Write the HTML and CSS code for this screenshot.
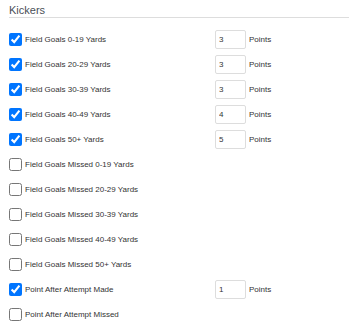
FILE: index.html
```html
<!DOCTYPE html>
<html lang="en">
<head>
    <meta charset="UTF-8">
    <meta name="viewport" content="width=device-width, initial-scale=1.0">
    <title>Kickers</title>
    <link rel="stylesheet" href="styles.css">
</head>
<body>
    <div class="section">
        <h3 class="section-title">Kickers</h3>
        <div class="rules">
            <div class="rule">
                <label class="rule-label"><input type="checkbox" checked> Field Goals 0-19 Yards</label>
                <input class="points" type="text" value="3"><span class="unit">Points</span>
            </div>
            <div class="rule">
                <label class="rule-label"><input type="checkbox" checked> Field Goals 20-29 Yards</label>
                <input class="points" type="text" value="3"><span class="unit">Points</span>
            </div>
            <div class="rule">
                <label class="rule-label"><input type="checkbox" checked> Field Goals 30-39 Yards</label>
                <input class="points" type="text" value="3"><span class="unit">Points</span>
            </div>
            <div class="rule">
                <label class="rule-label"><input type="checkbox" checked> Field Goals 40-49 Yards</label>
                <input class="points" type="text" value="4"><span class="unit">Points</span>
            </div>
            <div class="rule">
                <label class="rule-label"><input type="checkbox" checked> Field Goals 50+ Yards</label>
                <input class="points" type="text" value="5"><span class="unit">Points</span>
            </div>
            <div class="rule">
                <label class="rule-label"><input type="checkbox"> Field Goals Missed 0-19 Yards</label>
            </div>
            <div class="rule">
                <label class="rule-label"><input type="checkbox"> Field Goals Missed 20-29 Yards</label>
            </div>
            <div class="rule">
                <label class="rule-label"><input type="checkbox"> Field Goals Missed 30-39 Yards</label>
            </div>
            <div class="rule">
                <label class="rule-label"><input type="checkbox"> Field Goals Missed 40-49 Yards</label>
            </div>
            <div class="rule">
                <label class="rule-label"><input type="checkbox"> Field Goals Missed 50+ Yards</label>
            </div>
            <div class="rule">
                <label class="rule-label"><input type="checkbox" checked> Point After Attempt Made</label>
                <input class="points" type="text" value="1"><span class="unit">Points</span>
            </div>
            <div class="rule">
                <label class="rule-label"><input type="checkbox"> Point After Attempt Missed</label>
            </div>
        </div>
    </div>
</body>
</html>
```

FILE: styles.css
```css
body {
    margin: 0;
    font-family: 'Liberation Sans', Arial, sans-serif;
    color: #333;
    background-color: #fff;
}
.section {
    padding: 0 2px 0 9px;
}
.section-title {
    margin: 0;
    padding-top: 4px;
    height: 13px;
    font-size: 11px;
    font-weight: normal;
    line-height: 13px;
    color: #4a4f57;
    border-bottom: 1px solid #ddd;
}
.rules {
    margin-top: 9px;
}
.rule {
    display: grid;
    grid-template-columns: 206px 31px auto;
    align-items: center;
    height: 25px;
}
.rule-label {
    display: flex;
    align-items: center;
    gap: 3px;
    font-size: 8px;
}
.rule-label input {
    margin: 0;
    width: 13px;
    height: 13px;
}
.points {
    box-sizing: border-box;
    width: 31px;
    height: 19px;
    padding: 0 3px;
    border: 1px solid #ddd;
    border-radius: 2px;
    font-family: 'Liberation Sans', Arial, sans-serif;
    font-size: 8px;
    color: #333;
}
.unit {
    margin-left: 3px;
    font-size: 8px;
}
```
